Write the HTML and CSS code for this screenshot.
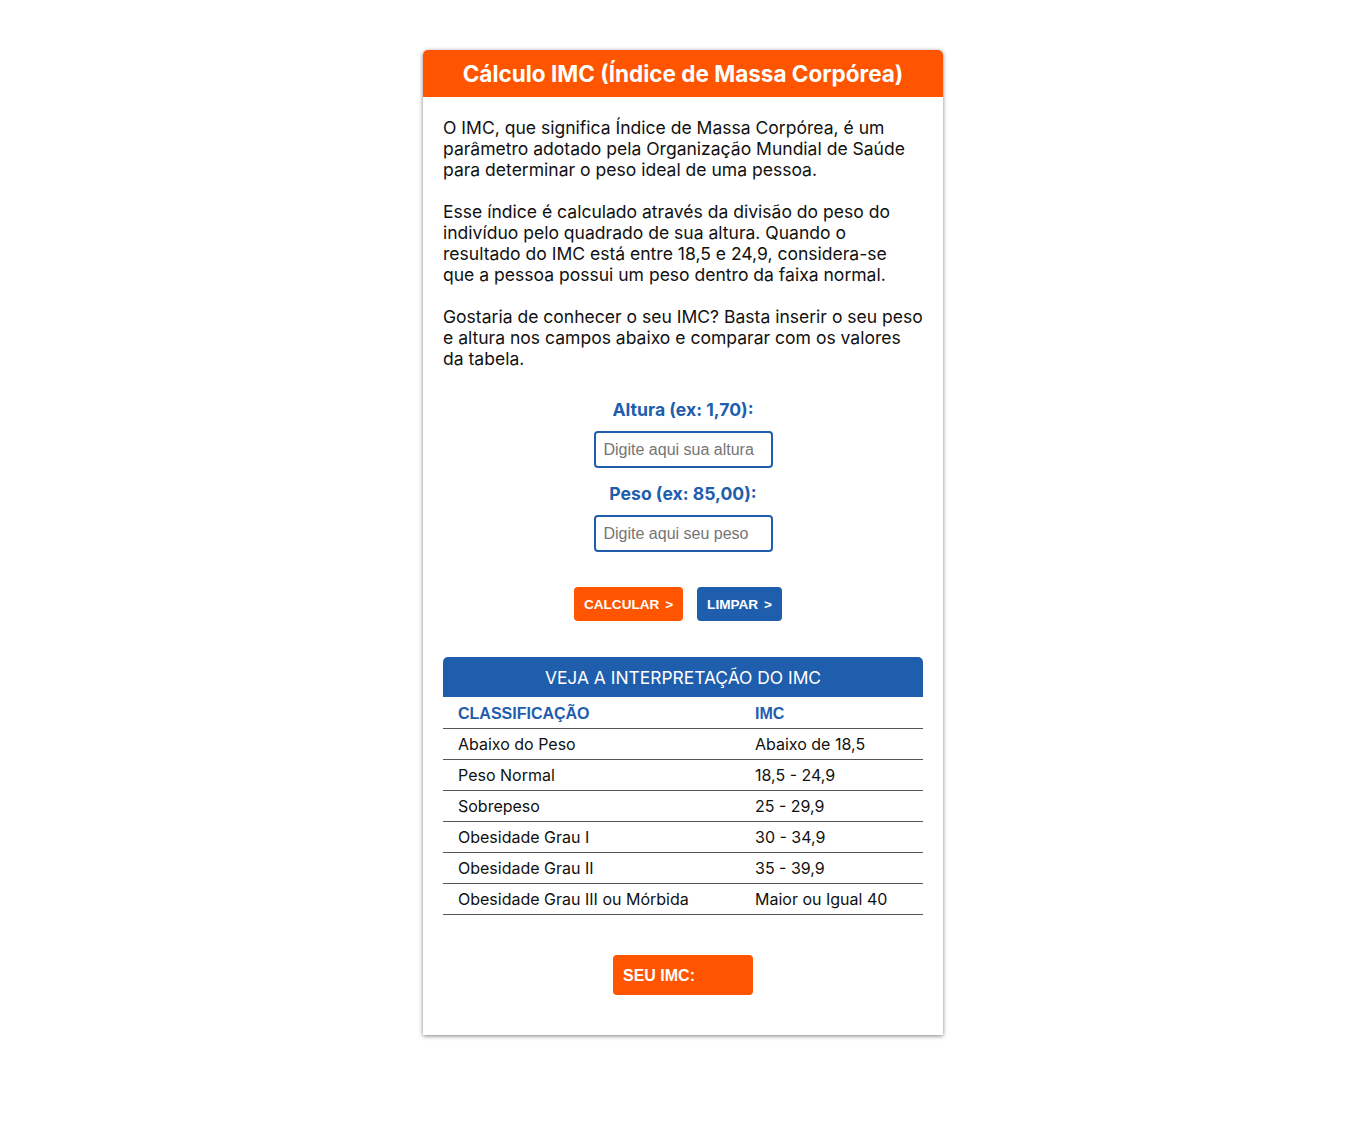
FILE: index.html
```html
<!DOCTYPE html>
<html lang="pt-BR">
<head>
<meta charset="utf-8">
<title>Cálculo IMC</title>
<link rel="stylesheet" href="styles.css">
</head>
<body>
<div class="card">
  <div class="card-header">Cálculo IMC (Índice de Massa Corpórea)</div>
  <div class="card-body">
    <p>O IMC, que significa Índice de Massa Corpórea, é um parâmetro adotado pela Organização Mundial de Saúde para determinar o peso ideal de uma pessoa.</p>
    <p>Esse índice é calculado através da divisão do peso do indivíduo pelo quadrado de sua altura. Quando o resultado do IMC está entre 18,5 e 24,9, considera-se que&nbsp;a pessoa possui um peso dentro da faixa normal.</p>
    <p>Gostaria de conhecer o seu IMC? Basta inserir o seu peso e altura nos campos abaixo e comparar com os valores da tabela.</p>

    <form class="form">
      <label class="label" for="altura">Altura (ex: 1,70):</label>
      <input class="input" id="altura" type="text" placeholder="Digite aqui sua altura">
      <label class="label" for="peso">Peso (ex: 85,00):</label>
      <input class="input" id="peso" type="text" placeholder="Digite aqui seu peso">
      <div class="buttons">
        <button type="button" class="btn btn-orange">CALCULAR &gt;</button>
        <button type="button" class="btn btn-blue">LIMPAR &gt;</button>
      </div>
    </form>

    <div class="table-title">VEJA A INTERPRETAÇÃO DO IMC</div>
    <table class="table">
      <thead>
        <tr><th class="c1">CLASSIFICAÇÃO</th><th>IMC</th></tr>
      </thead>
      <tbody>
        <tr><td class="c1">Abaixo do Peso</td><td>Abaixo de 18,5</td></tr>
        <tr><td class="c1">Peso Normal</td><td>18,5 - 24,9</td></tr>
        <tr><td class="c1">Sobrepeso</td><td>25 - 29,9</td></tr>
        <tr><td class="c1">Obesidade Grau I</td><td>30 - 34,9</td></tr>
        <tr><td class="c1">Obesidade Grau II</td><td>35 - 39,9</td></tr>
        <tr><td class="c1">Obesidade Grau III ou Mórbida</td><td>Maior ou Igual 40</td></tr>
      </tbody>
    </table>

    <div class="result-wrap">
      <div class="result">SEU IMC:</div>
    </div>
  </div>
</div>
</body>
</html>
```
FILE: styles.css
```css
* { box-sizing: border-box; }
html, body { margin: 0; padding: 0; background: #fff; }
body {
  font-family: Inter, "Liberation Sans", Arial, sans-serif;
  color: #111;
  padding: 50px 0 60px;
}
.card {
  width: 520px;
  margin: 0 auto;
  background: #fff;
  border-radius: 5px 5px 0 0;
  box-shadow: 0 1px 4px rgba(0,0,0,0.5);
}
.card-header {
  background: #ff5500;
  color: #fff;
  font-weight: 700;
  font-size: 22.5px;
  height: 47px;
  line-height: 48px;
  text-align: center;
  border-radius: 5px 5px 0 0;
}
.card-body {
  padding: 20px 20px 40px;
}
.card-body p {
  margin: 0 0 21px;
  font-size: 17.55px;
  line-height: 21px;
}
.form {
  display: flex;
  flex-direction: column;
  align-items: center;
  padding-top: 9px;
}
.label {
  color: #1f5dad;
  font-weight: 700;
  font-size: 17.6px;
  line-height: 22px;
  margin-bottom: 10px;
}
.input {
  width: 179px;
  height: 37px;
  border: 2px solid #1f5dad;
  border-radius: 4px;
  padding: 0 8px;
  font-family: "Liberation Sans", Arial, sans-serif;
  font-size: 16px;
  color: #333;
  margin-bottom: 15px;
  outline: none;
}
.input::placeholder { color: #757575; }
.buttons {
  display: flex;
  gap: 14px;
  margin-top: 20px;
  padding-right: 10px;
}
.btn {
  border: none;
  border-radius: 4px;
  color: #fff;
  font-family: "Liberation Sans", Arial, sans-serif;
  font-weight: 700;
  font-size: 13.6px;
  word-spacing: 2px;
  height: 34px;
  padding: 0;
  white-space: nowrap;
}
.btn-orange { background: #ff5500; width: 109px; }
.btn-blue { background: #1f5dad; width: 85px; }
.table-title {
  margin-top: 36px;
  background: #1f5dad;
  color: #fff;
  font-size: 17.4px;
  height: 40px;
  line-height: 41px;
  text-align: center;
  border-radius: 5px 5px 0 0;
}
.table {
  width: 100%;
  border-collapse: collapse;
  font-size: 16px;
}
.table th, .table td {
  text-align: left;
  padding: 0 15px;
  height: 31px;
  border-bottom: 1px solid #555;
}
.table th {
  color: #1f5dad;
  font-weight: 700;
  font-family: "Liberation Sans", Arial, sans-serif;
  font-size: 16px;
  padding-top: 3px;
}
.table td { color: #111; }
.table .c1 { width: 297px; }
.result-wrap {
  display: flex;
  justify-content: center;
  margin-top: 40px;
}
.result {
  width: 140px;
  height: 40px;
  line-height: 41px;
  background: #ff5500;
  color: #fff;
  font-family: "Liberation Sans", Arial, sans-serif;
  font-weight: 700;
  font-size: 16px;
  padding-left: 10px;
  border-radius: 4px;
}
```
